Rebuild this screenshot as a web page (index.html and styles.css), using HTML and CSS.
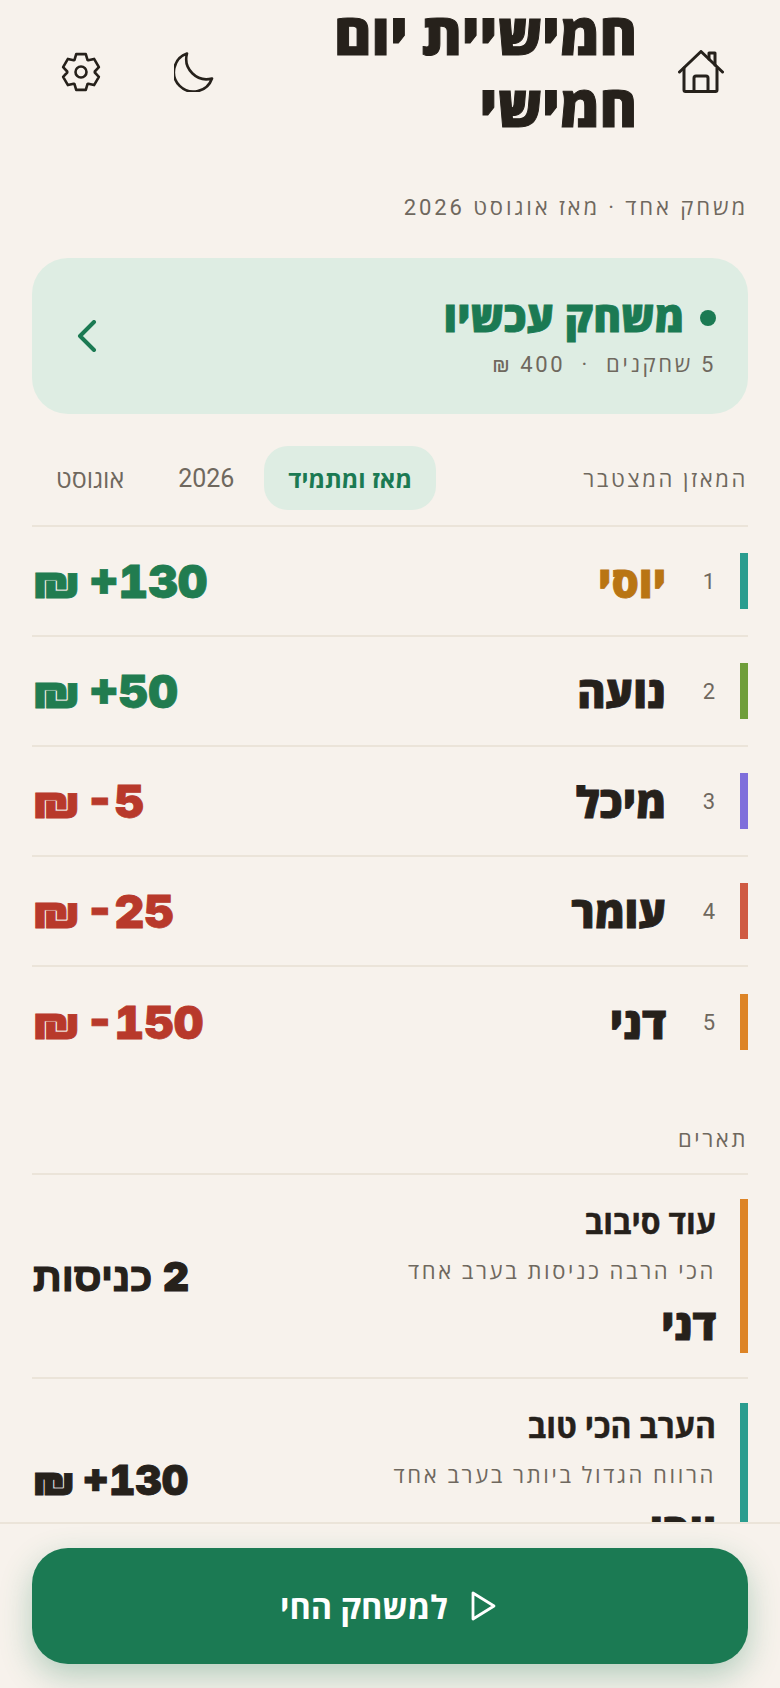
FILE: index.html
```html
<!DOCTYPE html>
<html lang="he" dir="rtl">
<head>
    <meta charset="UTF-8">
    <meta name="viewport" content="width=device-width, initial-scale=1.0">
    <title>חמישיית יום חמישי</title>
    <link rel="stylesheet" href="styles.css">
</head>
<body>

    <div class="page">
        <header class="top-bar">
            <button class="icon-btn home-btn" aria-label="בית">
                <svg width="46" height="44" viewBox="0 0 46 44" fill="none" stroke="currentColor" stroke-width="3" stroke-linecap="round" stroke-linejoin="round">
                    <path d="M1.500 22 23 1.500 44.500 22"/>
                    <path d="M6 18v22a1.500 1.500 0 0 0 1.500 1.500h30a1.500 1.500 0 0 0 1.500-1.500V18"/>
                    <path d="M16 41.500V28a2 2 0 0 1 2-2h10a2 2 0 0 1 2 2v13.500"/>
                    <path d="M31 9V3h6v12"/>
                </svg>
            </button>
            <h1>חמישיית יום חמישי</h1>
            <button class="icon-btn moon-btn" aria-label="מצב לילה">
                <svg width="40" height="40" viewBox="0 0 40 40" fill="none" stroke="currentColor" stroke-width="2.6" stroke-linecap="round" stroke-linejoin="round">
                    <path d="M13 1.500A19.600 19.600 0 1 0 38 26.500 20.400 20.400 0 0 1 13 1.500Z"/>
                </svg>
            </button>
            <button class="icon-btn gear-btn" aria-label="הגדרות">
                <svg width="40" height="40" viewBox="0 0 40 40" fill="none" stroke="currentColor" stroke-width="2.6" stroke-linecap="round" stroke-linejoin="round">
                    <circle cx="20" cy="20" r="5.500"/>
                    <path d="M13.520 7.820 15.200 2.130H24.800L26.480 7.820 27.310 8.300 33.080 6.910 37.880 15.220 33.790 19.520V20.480L37.880 24.780 33.080 33.090 27.310 31.700 26.480 32.180 24.800 37.870H15.200L13.520 32.180 12.690 31.700 6.920 33.090 2.120 24.780 6.210 20.480V19.520L2.120 15.220 6.920 6.910 12.690 8.300Z"/>
                </svg>
            </button>
        </header>

        <p class="subtitle">משחק אחד · מאז אוגוסט 2026</p>

        <a class="live-card">
            <div class="live-info">
                <div class="live-title"><span class="live-dot"></span>משחק עכשיו</div>
                <div class="live-meta">5 שחקנים &nbsp;·&nbsp; 400 ₪</div>
            </div>
            <svg class="chevron" width="20" height="32" viewBox="0 0 20 32" fill="none" stroke="currentColor" stroke-width="4" stroke-linecap="round" stroke-linejoin="round">
                <path d="M17 2 3 16l14 14"/>
            </svg>
        </a>

        <div class="balance-head">
            <h2 class="section-label">המאזן המצטבר</h2>
            <div class="tabs">
                <button class="tab tab-active">מאז ומתמיד</button>
                <button class="tab">2026</button>
                <button class="tab">אוגוסט</button>
            </div>
        </div>

        <ul class="rank-list">
            <li class="rank-row">
                <span class="color-bar bar-teal"></span>
                <span class="rank-num">1</span>
                <span class="rank-name name-leader">יוסי</span>
                <span class="rank-amount plus"><bdi>+130</bdi> ₪</span>
            </li>
            <li class="rank-row">
                <span class="color-bar bar-green"></span>
                <span class="rank-num">2</span>
                <span class="rank-name">נועה</span>
                <span class="rank-amount plus"><bdi>+50</bdi> ₪</span>
            </li>
            <li class="rank-row">
                <span class="color-bar bar-purple"></span>
                <span class="rank-num">3</span>
                <span class="rank-name">מיכל</span>
                <span class="rank-amount minus"><bdi>-5</bdi> ₪</span>
            </li>
            <li class="rank-row">
                <span class="color-bar bar-red"></span>
                <span class="rank-num">4</span>
                <span class="rank-name">עומר</span>
                <span class="rank-amount minus"><bdi>-25</bdi> ₪</span>
            </li>
            <li class="rank-row">
                <span class="color-bar bar-orange"></span>
                <span class="rank-num">5</span>
                <span class="rank-name">דני</span>
                <span class="rank-amount minus"><bdi>-150</bdi> ₪</span>
            </li>
        </ul>

        <h2 class="section-label titles-label">תארים</h2>

        <div class="titles-list">
            <div class="title-row">
                <span class="title-bar bar-orange"></span>
                <div class="title-info">
                    <div class="title-name">עוד סיבוב</div>
                    <div class="title-desc">הכי הרבה כניסות בערב אחד</div>
                    <div class="title-holder">דני</div>
                </div>
                <div class="title-value value-count">2 כניסות</div>
            </div>
            <div class="title-row">
                <span class="title-bar bar-teal"></span>
                <div class="title-info">
                    <div class="title-name">הערב הכי טוב</div>
                    <div class="title-desc">הרווח הגדול ביותר בערב אחד</div>
                    <div class="title-holder">יוסי</div>
                </div>
                <div class="title-value"><bdi>+130</bdi> ₪</div>
            </div>
        </div>
    </div>

    <footer class="bottom-bar">
        <button class="live-btn">
            <svg width="26" height="30" viewBox="0 0 26 30" fill="none" stroke="currentColor" stroke-width="2.800" stroke-linecap="round" stroke-linejoin="round">
                <path d="M24 15 3 2v26z"/>
            </svg>
            למשחק החי
        </button>
    </footer>

</body>
</html>
```

FILE: styles.css
```css
* {
    box-sizing: border-box;
}

html, body {
    margin: 0;
    height: 100%;
}

body {
    font-family: Roboto, "Open Sans", sans-serif;
    background: #F7F2EC;
    color: #26211B;
    overflow: hidden;
    height: 1688px;
    position: relative;
}

.page {
    padding: 0 32px;
}

button {
    font-family: inherit;
    background: none;
    border: none;
    padding: 0;
    color: inherit;
}

.top-bar {
    display: flex;
    align-items: center;
    height: 144px;
}

.icon-btn {
    display: flex;
    width: 40px;
    height: 40px;
    align-items: center;
    justify-content: center;
    flex-shrink: 0;
}

.home-btn {
    width: 46px;
    height: 44px;
    margin-right: 24px;
    margin-left: 41px;
}

.moon-btn {
    margin-right: 0;
}

.gear-btn {
    margin-right: 73px;
    margin-left: 29px;
}

h1 {
    flex: 1;
    margin: 0;
    font-size: 57px;
    line-height: 72px;
    font-weight: 900;
    color: #26211B;
    -webkit-text-stroke: 1px #26211B;
}

.subtitle {
    margin: 50px 0 0;
    font-size: 22px;
    line-height: 28px;
    letter-spacing: 2.9px;
    color: #6F685E;
}

.live-card {
    display: flex;
    align-items: center;
    justify-content: space-between;
    margin-top: 36px;
    height: 156px;
    padding: 0 32px;
    background: #DEEDE3;
    border-radius: 36px;
    color: #1B7A53;
}

.live-title {
    display: flex;
    align-items: center;
    font-size: 42.400px;
    line-height: 52px;
    font-weight: 900;
    -webkit-text-stroke: 0.8px #1B7A53;
}

.live-dot {
    width: 16px;
    height: 16px;
    margin-left: 16px;
    border-radius: 50%;
    background: #1B7A53;
}

.live-meta {
    margin-top: 6px;
    font-size: 22px;
    line-height: 30px;
    letter-spacing: 0.12em;
    color: #6F685E;
}

.chevron {
    margin-left: 13px;
}

.balance-head {
    display: flex;
    align-items: center;
    justify-content: space-between;
    margin-top: 32px;
}

.section-label {
    margin: 0;
    font-size: 22px;
    font-weight: 400;
    letter-spacing: 0.12em;
    color: #6F685E;
}

.tabs {
    display: flex;
    gap: 6px;
}

.tab {
    height: 64px;
    padding: 0 24px;
    border-radius: 24px;
    font-size: 25px;
    color: #6F685E;
}

.tab-active {
    background: #DEEDE3;
    color: #1B7A53;
    font-weight: 700;
    font-size: 24px;
}

.rank-list {
    list-style: none;
    margin: 15px 0 0;
    padding: 0;
    border-top: 2px solid #EBE4D9;
}

.rank-row {
    display: flex;
    align-items: center;
    height: 110px;
    border-bottom: 2px solid #EBE4D9;
}

.rank-row:last-child {
    border-bottom: none;
}

.color-bar {
    width: 8px;
    height: 56px;
}

.bar-teal { background: #2A9D8F; }
.bar-green { background: #6F9E3A; }
.bar-purple { background: #7F6FDB; }
.bar-red { background: #CF5A42; }
.bar-orange { background: #DD8426; }

.rank-num {
    width: 27px;
    margin-right: 25px;
    font-size: 22px;
    color: #6F685E;
    text-align: right;
}

.rank-name {
    flex: 1;
    margin-right: 22px;
    font-size: 43px;
    font-weight: 900;
    -webkit-text-stroke: 0.8px currentColor;
}

.name-leader {
    color: #B97513;
}

.rank-amount {
    margin-left: 1px;
    font-family: Inter, sans-serif;
    font-size: 46px;
    font-weight: 900;
    font-variant-numeric: tabular-nums;
    word-spacing: -3px;
    -webkit-text-stroke: 0.8px currentColor;
}

.minus bdi {
    margin-left: -4px;
}

.plus { color: #217C50; }
.minus { color: #B8392B; }

.titles-label {
    margin-top: 48px;
    line-height: 30px;
}

.titles-list {
    margin-top: 18px;
    border-top: 2px solid #EBE4D9;
}

.title-row {
    display: flex;
    align-items: center;
    padding: 24px 0;
    border-bottom: 2px solid #EBE4D9;
}

.title-bar {
    align-self: stretch;
    width: 8px;
    flex-shrink: 0;
}

.title-info {
    flex: 1;
    margin-right: 24px;
}

.title-name {
    font-size: 32px;
    line-height: 48px;
    font-weight: 700;
    -webkit-text-stroke: 0.4px #26211B;
}

.title-desc {
    margin-top: 10px;
    font-size: 22px;
    line-height: 30px;
    letter-spacing: 0.12em;
    color: #6F685E;
}

.title-holder {
    margin-top: 12px;
    font-size: 42px;
    line-height: 54px;
    font-weight: 900;
    -webkit-text-stroke: 0.8px #26211B;
}

.title-value {
    margin-left: 1px;
    font-family: Inter, Roboto, sans-serif;
    font-size: 41px;
    font-weight: 900;
    font-variant-numeric: tabular-nums;
    word-spacing: -3px;
    -webkit-text-stroke: 0.8px #26211B;
}

.value-count {
    font-size: 40px;
    word-spacing: 0;
    -webkit-text-stroke: 1.2px #26211B;
}

.bottom-bar {
    position: absolute;
    left: 0;
    right: 0;
    bottom: 0;
    height: 166px;
    padding: 24px 32px;
    background: #F7F2EC;
    border-top: 2px solid #EBE4D9;
}

.live-btn {
    display: flex;
    align-items: center;
    justify-content: center;
    gap: 22px;
    width: 100%;
    height: 116px;
    padding-right: 4px;
    border-radius: 36px;
    background: #1B7A53;
    color: #FFFFFF;
    font-size: 32.500px;
    font-weight: 700;
    box-shadow: 0 12px 32px rgba(27, 122, 83, 0.3);
}
```
